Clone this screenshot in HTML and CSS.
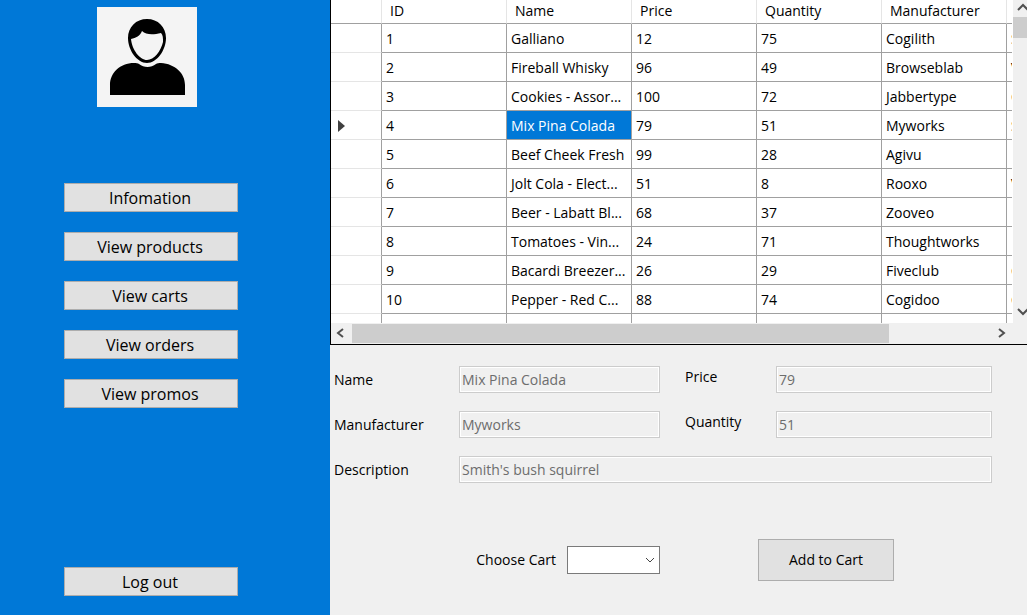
FILE: index.html
```html
<!DOCTYPE html>
<html lang="en">
<head>
<meta charset="utf-8">
<title>Products</title>
<link rel="stylesheet" href="styles.css">
</head>
<body>
<div class="app">
  <nav class="sidebar">
    <svg class="avatar" viewBox="0 0 100 100" role="img" aria-label="User">
      <rect width="100" height="100" fill="#f4f4f4"/>
      <path d="M13 88V78C13 66 23 56 37 56C39 56 41 56 42 57C47 61 54 61 59 57C60 56 62 56 64 56C78 57 88 66 88 78V88Z"/>
      <path fill-rule="evenodd" d="M50 12C39 12 31 20 31 31C31 43 40 56 50 56C60 56 69 43 69 31C69 20 61 12 50 12ZM45 24C49 28 56 28 64 26C66 28 66 31 66 35C64 44 57 53 50 53C43 53 35 43 34 32C39 31 43 29 45 24Z"/>
    </svg>
    <div class="menu">
      <button class="btn nav-btn">Infomation</button>
      <button class="btn nav-btn">View products</button>
      <button class="btn nav-btn">View carts</button>
      <button class="btn nav-btn">View orders</button>
      <button class="btn nav-btn">View promos</button>
    </div>
    <button class="btn nav-btn logout">Log out</button>
  </nav>
  <main class="main">
    <section class="grid">
      <div class="grid-view">
        <table class="table">
          <colgroup><col class="col-mark"><col class="col"><col class="col"><col class="col"><col class="col"><col class="col"><col class="col"></colgroup>
          <thead><tr><th></th><th>ID</th><th>Name</th><th>Price</th><th>Quantity</th><th>Manufacturer</th><th></th></tr></thead>
          <tbody>
            <tr><th></th><td>1</td><td>Galliano</td><td>12</td><td>75</td><td>Cogilith</td><td>S</td></tr>
            <tr><th></th><td>2</td><td>Fireball Whisky</td><td>96</td><td>49</td><td>Browseblab</td><td>V</td></tr>
            <tr><th></th><td>3</td><td>Cookies - Assor...</td><td>100</td><td>72</td><td>Jabbertype</td><td>C</td></tr>
            <tr><th><svg class="marker" viewBox="0 0 7 12" aria-hidden="true"><path d="M0 0L7 6L0 12Z" fill="#404040"/></svg></th><td>4</td><td class="selected">Mix Pina Colada</td><td>79</td><td>51</td><td>Myworks</td><td>S</td></tr>
            <tr><th></th><td>5</td><td>Beef Cheek Fresh</td><td>99</td><td>28</td><td>Agivu</td><td></td></tr>
            <tr><th></th><td>6</td><td>Jolt Cola - Elect...</td><td>51</td><td>8</td><td>Rooxo</td><td>V</td></tr>
            <tr><th></th><td>7</td><td>Beer - Labatt Bl...</td><td>68</td><td>37</td><td>Zooveo</td><td></td></tr>
            <tr><th></th><td>8</td><td>Tomatoes - Vin...</td><td>24</td><td>71</td><td>Thoughtworks</td><td></td></tr>
            <tr><th></th><td>9</td><td>Bacardi Breezer...</td><td>26</td><td>29</td><td>Fiveclub</td><td>C</td></tr>
            <tr><th></th><td>10</td><td>Pepper - Red C...</td><td>88</td><td>74</td><td>Cogidoo</td><td>C</td></tr>
            <tr><th></th><td></td><td></td><td></td><td></td><td></td><td></td></tr>
          </tbody>
        </table>
      </div>
      <div class="vscroll">
        <svg class="arrow-v" viewBox="0 0 14 17" aria-hidden="true"><path d="M5 10L10 5L15 10"/></svg>
        <div class="vthumb"></div>
        <svg class="arrow-v arrow-down" viewBox="0 0 14 17" aria-hidden="true"><path d="M5 5L10 10L15 5"/></svg>
      </div>
      <div class="hscroll">
        <svg class="arrow-h" viewBox="0 0 21 20" aria-hidden="true"><path d="M12 6L7 10L12 14"/></svg>
        <div class="htrack"><div class="hthumb"></div></div>
        <svg class="arrow-h" viewBox="0 0 21 20" aria-hidden="true"><path d="M8 6L13 10L8 14"/></svg>
      </div>
    </section>
    <form class="details">
      <div class="fields">
        <label for="name">Name</label><input id="name" value="Mix Pina Colada" disabled>
        <label class="raised" for="price">Price</label><input id="price" value="79" disabled>
        <label for="maker">Manufacturer</label><input id="maker" value="Myworks" disabled>
        <label class="raised" for="qty">Quantity</label><input id="qty" value="51" disabled>
        <label for="desc">Description</label><input class="wide" id="desc" value="Smith's bush squirrel" disabled>
      </div>
      <div class="actions">
        <label for="cart">Choose Cart</label>
        <span class="select-wrap">
          <select id="cart"><option></option></select>
          <svg class="chevron" viewBox="0 0 10 6" aria-hidden="true"><path d="M1 1L5 5L9 1"/></svg>
        </span>
        <button class="btn add" type="button">Add to Cart</button>
      </div>
    </form>
  </main>
</div>
</body>
</html>
```
FILE: styles.css
```css
* { box-sizing: border-box; }
body { margin: 0; font: 14px/20px "Open Sans", "Noto Sans", sans-serif; color: #000; background: #f0f0f0; }
.app { display: flex; min-height: 100vh; }
.sidebar { flex: 0 0 330px; display: flex; flex-direction: column; align-items: center; padding: 7px 28px 19px 0; background: #0078d7; }
.avatar { width: 100px; height: 100px; margin-right: 8px; }
.menu { display: flex; flex-direction: column; gap: 20px; margin-top: 76px; }
.btn { font: inherit; color: #000; background: #e1e1e1; border: 1px solid #adadad; padding: 0; }
.nav-btn { width: 174px; height: 29px; padding-right: 2px; font-size: 16px; line-height: 24px; }
.logout { margin-top: auto; }
.main { flex: 1; min-width: 0; display: flex; flex-direction: column; }
.grid { display: grid; grid-template-columns: minmax(0, 1fr) 14px; border: solid #000; border-width: 0 0 1px 1px; }
.grid-view { overflow: hidden; height: 323px; background: #fff; border-right: 1px solid #fff; }
.table { table-layout: fixed; width: 801px; border-collapse: separate; border-spacing: 0; }
.col-mark { width: 51px; }
.col { width: 125px; }
.table th, .table td { height: 29px; padding: 2px 2px 0 4px; border: solid #a0a0a0; border-width: 0 1px 1px 0; font-weight: 400; text-align: left; white-space: nowrap; overflow: hidden; }
.table thead th { height: 24px; padding: 0 8px 2px; border-right-color: #e5e5e5; }
.table tbody th { border-bottom-color: #e5e5e5; padding: 2px 7px 0; }
.table .selected { background: #0078d7; color: #fff; }
.marker { display: block; width: 7px; height: 12px; }
.vscroll { display: flex; flex-direction: column; background: #f0f0f0; }
.arrow-v { width: 14px; height: 17px; }
.vthumb { height: 21px; background: #cdcdcd; }
.arrow-down { margin-top: auto; margin-bottom: 2px; }
.arrow-v path, .arrow-h path { fill: none; stroke: #505050; stroke-width: 2; }
.hscroll { grid-column: 1 / -1; display: flex; height: 21px; padding-right: 15px; }
.arrow-h { width: 21px; height: 20px; }
.htrack { flex: 1; padding: 1px 0; }
.hthumb { width: 84%; height: 19px; background: #cdcdcd; }
.details { padding: 21px 35px 34px 4px; flex: 1; display: flex; flex-direction: column; }
.fields { display: grid; grid-template-columns: 125px minmax(0, 201fr) 116px minmax(0, 216fr); row-gap: 18px; align-items: center; }
.fields input { width: 100%; height: 27px; padding: 0 2px; font: inherit; color: #6d6d6d; background: #f0f0f0; border: 1px solid #ccc; box-shadow: inset 0 0 0 1px #fff; border-radius: 0; }
.raised { padding: 0 0 6px; margin-left: 25px; }
.fields .wide { grid-column: 2 / -1; }
.actions { display: flex; align-items: center; margin-top: auto; padding-right: 98px; }
.actions label { margin-left: auto; margin-right: 11px; }
.select-wrap { position: relative; margin-right: 98px; }
select { display: block; width: 93px; height: 28px; appearance: none; border: 1px solid #7a7a7a; border-radius: 0; background: #fff; font: inherit; }
.chevron { position: absolute; right: 5px; top: 11px; width: 10px; height: 6px; fill: none; stroke: #444; pointer-events: none; }
.add { width: 136px; height: 42px; }
```
